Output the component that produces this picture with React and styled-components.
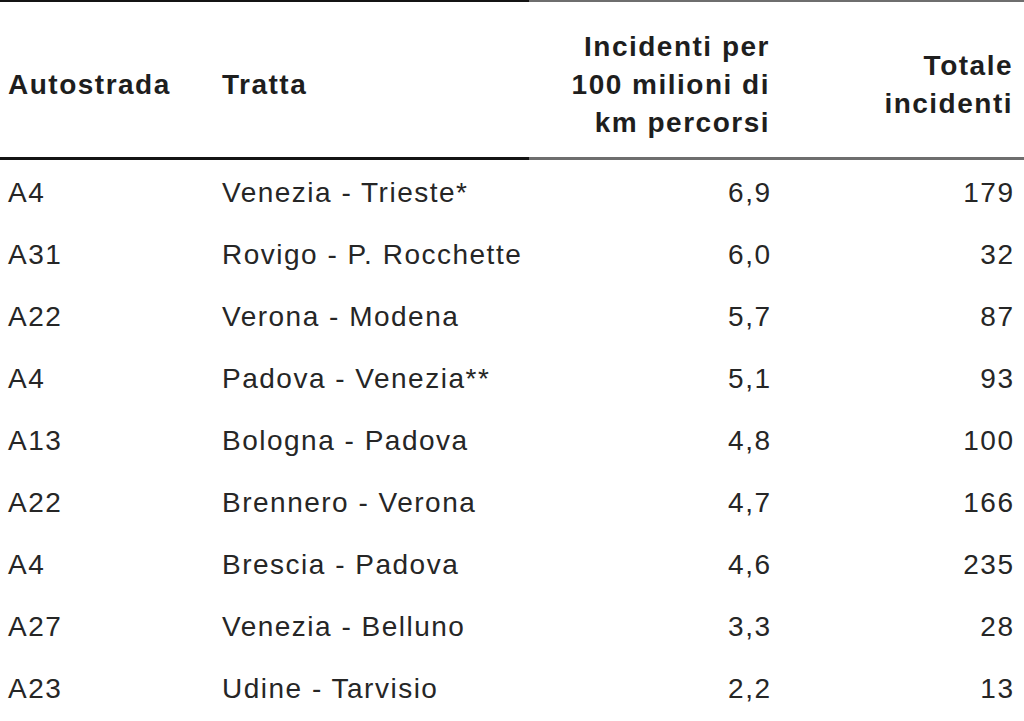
import React from "react";
import styled, { createGlobalStyle } from "styled-components";

const Global = createGlobalStyle`
  html, body { margin: 0; padding: 0; background: #ffffff; }
  body { font-family: "Liberation Sans", Arial, Helvetica, sans-serif; }
`;

const Table = styled.div`
  width: 1024px;
  display: flex;
  flex-direction: column;
`;

const Rule = styled.div`
  height: ${(p) => p.$h}px;
  background: linear-gradient(to right, #141414 0 529px, #6e6e6e 529px 100%);
`;

const Grid = styled.div`
  display: grid;
  grid-template-columns: 222px 338px 210px 243px;
  padding-right: 11px;
  align-items: center;
`;

const HeadRow = styled(Grid)`
  padding-top: 26px;
  padding-bottom: 15px;
  height: 114px;
`;

const HeadCell = styled.div`
  font-weight: 700;
  font-size: 28px;
  line-height: 38px;
  letter-spacing: 1.5px;
  color: #1e1e1e;
  text-align: ${(p) => (p.$right ? "right" : "left")};
  padding-left: ${(p) => (p.$first ? "8px" : "0")};
`;

const Body = styled.div`
  display: flex;
  flex-direction: column;
  padding-top: 2px;
`;

const Row = styled(Grid)`
  height: 62px;
`;

const Cell = styled.div`
  font-size: 28px;
  line-height: 32px;
  letter-spacing: 1.5px;
  color: #262626;
  white-space: nowrap;
  text-align: ${(p) => (p.$right ? "right" : "left")};
  padding-left: ${(p) => (p.$first ? "8px" : "0")};
  margin-right: ${(p) => (p.$right ? "-1.5px" : "0")};
`;

const rows = [
  ["A4", "Venezia - Trieste*", "6,9", "179"],
  ["A31", "Rovigo - P. Rocchette", "6,0", "32"],
  ["A22", "Verona - Modena", "5,7", "87"],
  ["A4", "Padova - Venezia**", "5,1", "93"],
  ["A13", "Bologna - Padova", "4,8", "100"],
  ["A22", "Brennero - Verona", "4,7", "166"],
  ["A4", "Brescia - Padova", "4,6", "235"],
  ["A27", "Venezia - Belluno", "3,3", "28"],
  ["A23", "Udine - Tarvisio", "2,2", "13"],
];

export default function App() {
  return (
    <>
      <Global />
      <Table>
        <Rule $h={2} />
        <HeadRow>
          <HeadCell $first>Autostrada</HeadCell>
          <HeadCell>Tratta</HeadCell>
          <HeadCell $right>
            Incidenti per
            <br />
            100 milioni di
            <br />
            km percorsi
          </HeadCell>
          <HeadCell $right>
            Totale
            <br />
            incidenti
          </HeadCell>
        </HeadRow>
        <Rule $h={3} />
        <Body>
          {rows.map((r, i) => (
            <Row key={i}>
              <Cell $first>{r[0]}</Cell>
              <Cell>{r[1]}</Cell>
              <Cell $right>{r[2]}</Cell>
              <Cell $right>{r[3]}</Cell>
            </Row>
          ))}
        </Body>
      </Table>
    </>
  );
}
